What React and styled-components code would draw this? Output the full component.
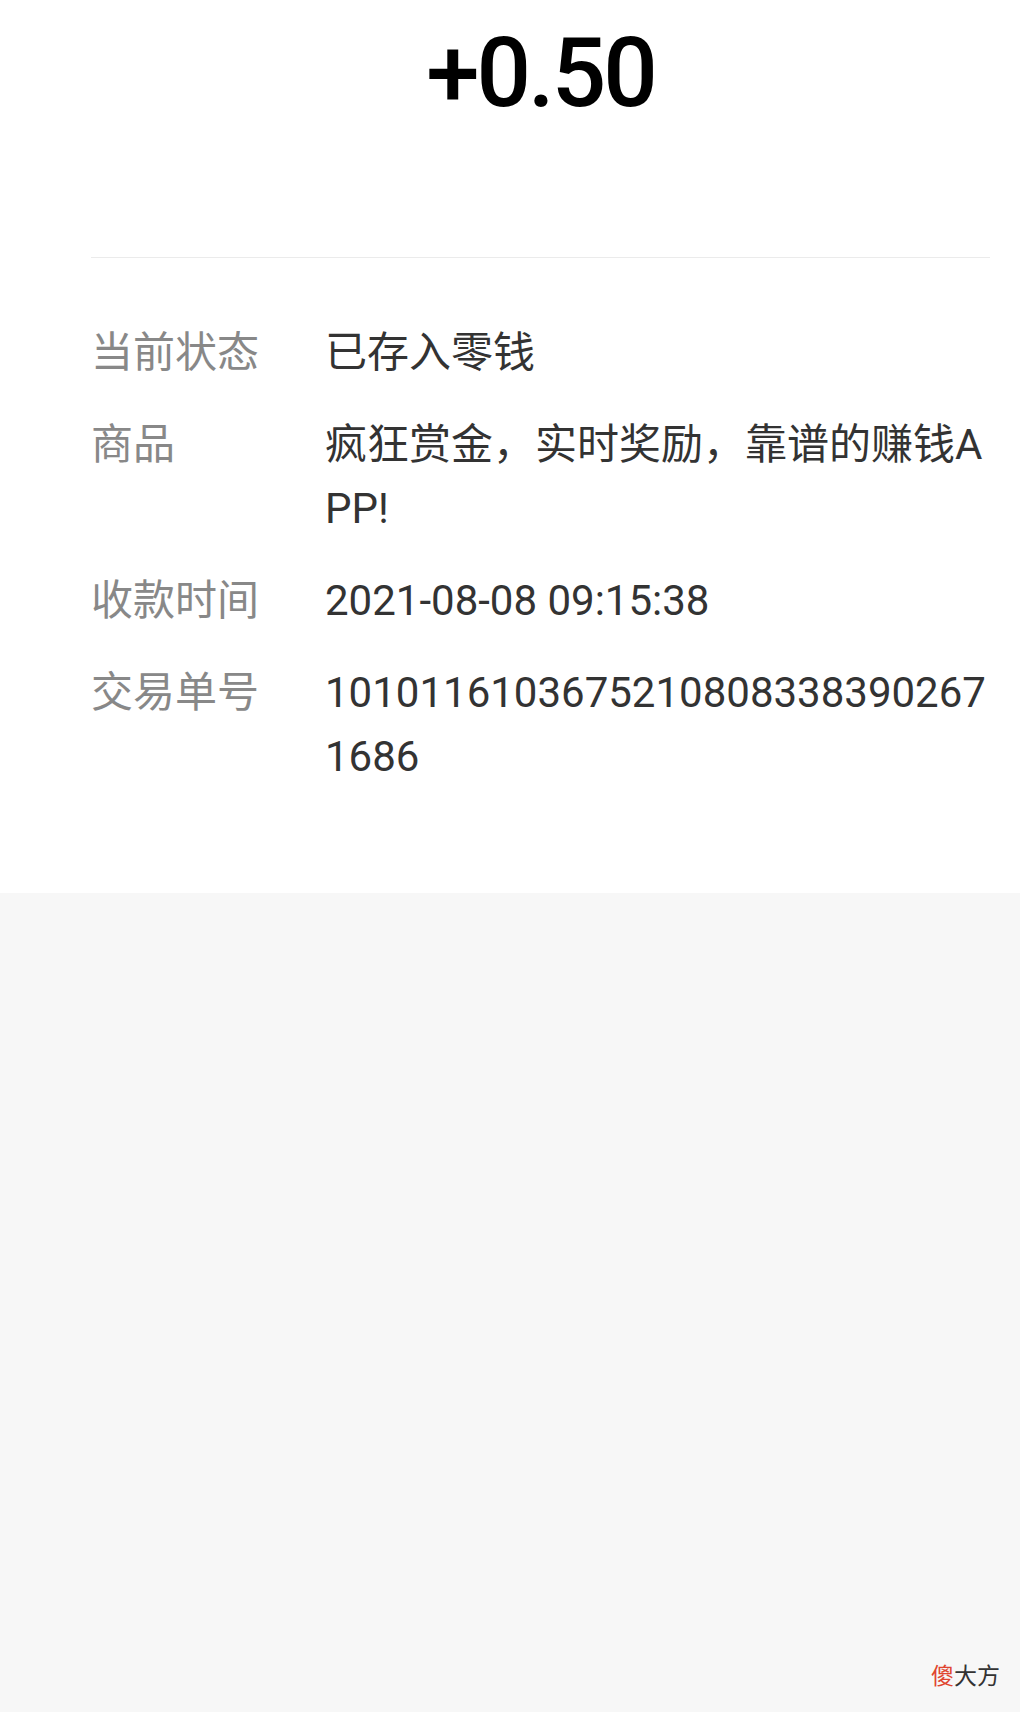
import React from "react";
import styled, { createGlobalStyle } from "styled-components";

const GlobalStyle = createGlobalStyle`
	html, body {
		margin: 0;
		padding: 0;
		background: #f7f7f7;
	}
	body {
		font-family: Roboto, "Noto Sans CJK SC", sans-serif;
	}
`;

const Page = styled.div`
	position: relative;
	min-height: 1712px;
	background: #f7f7f7;
`;

const Sheet = styled.div`
	background: #ffffff;
	padding: 25px 30px 104px 91px;
`;

const Amount = styled.div`
	font-family: Roboto, sans-serif;
	font-size: 96px;
	line-height: 96px;
	font-weight: 500;
	letter-spacing: -3px;
	color: #000000;
	text-align: center;
	padding-bottom: 136px;
	border-bottom: 1px solid #ebebeb;
`;

const List = styled.div`
	display: flex;
	flex-direction: column;
	gap: 28px;
	padding-top: 63px;
`;

const Row = styled.div`
	display: grid;
	grid-template-columns: 234px 1fr;
	font-size: 42px;
	line-height: 64px;
`;

const Label = styled.div`
	color: #888888;
`;

const Value = styled.div`
	color: #333333;
	word-break: break-all;
`;

const Mark = styled.div`
	position: absolute;
	right: 20px;
	bottom: 24px;
	font-family: "Noto Sans CJK SC", sans-serif;
	font-size: 23px;
	line-height: 28px;
	color: #333333;
`;

const Red = styled.span`
	color: #e0452f;
`;

const rows = [
	["当前状态", "已存入零钱"],
	["商品", "疯狂赏金，实时奖励，靠谱的赚钱APP!"],
	["收款时间", "2021-08-08 09:15:38"],
	["交易单号", "10101161036752108083383902671686"],
];

export default function App() {
	return (
		<Page>
			<GlobalStyle />
			<Sheet>
				<Amount>+0.50</Amount>
				<List>
					{rows.map(([k, v]) => (
						<Row key={k}>
							<Label>{k}</Label>
							<Value>{v}</Value>
						</Row>
					))}
				</List>
			</Sheet>
			<Mark>
				<Red>傻</Red>大方
			</Mark>
		</Page>
	);
}
